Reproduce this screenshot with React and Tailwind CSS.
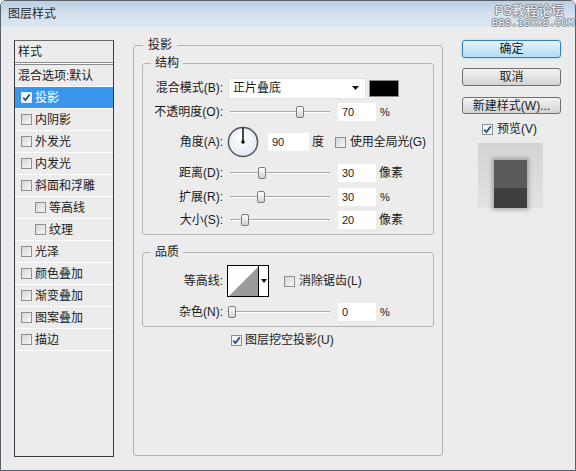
import React from 'react';

const font = "font-['Liberation_Sans','Noto_Sans_CJK_SC',sans-serif]";

function Check({ checked, light }) {
  return (
    <span
      className={`inline-flex size-[11px] shrink-0 items-center justify-center border ${
        light ? 'border-[#dfe9f5] bg-white' : 'border-[#8e8f8f] bg-gradient-to-br from-[#d6d6d6] to-[#f6f6f6]'
      } ${checked ? 'bg-none bg-[#f4f6fa]' : ''}`}
    >
      {checked && (
        <svg width="9" height="9" viewBox="0 0 9 9">
          <path d="M1.2 4.6 L3.4 7 L7.8 1.4" fill="none" stroke="#2c4d8c" strokeWidth="1.8" />
        </svg>
      )}
    </span>
  );
}

function Slider({ pos, width = 100 }) {
  return (
    <div className="relative h-[14px]" style={{ width }}>
      <div className="absolute left-0 right-0 top-[6px] h-[2px] border-t border-[#a9a9a9] bg-white" />
      <div
        className="absolute top-[1px] h-[12px] w-[8px] rounded-[2px] border border-[#7b7b7b] bg-gradient-to-b from-white to-[#d2d2d2]"
        style={{ left: pos - 4 }}
      />
    </div>
  );
}

function Field({ value, w = 38 }) {
  return (
    <div
      className="flex h-[18px] items-center bg-white pl-[4px] text-[11px] text-[#222]"
      style={{ width: w }}
    >
      {value}
    </div>
  );
}

function Row({ label, children, className = '' }) {
  return (
    <div className={`flex items-center ${className}`}>
      <div className="w-[80px] shrink-0 text-right">{label}</div>
      {children}
    </div>
  );
}

const styles = [
  { t: '混合选项:默认', box: false },
  { t: '投影', checked: true, sel: true },
  { t: '内阴影' },
  { t: '外发光' },
  { t: '内发光' },
  { t: '斜面和浮雕' },
  { t: '等高线', indent: true },
  { t: '纹理', indent: true },
  { t: '光泽' },
  { t: '颜色叠加' },
  { t: '渐变叠加' },
  { t: '图案叠加' },
  { t: '描边' },
];

export default function App() {
  return (
    <div className={`${font} flex h-[471px] w-[576px] flex-col overflow-hidden rounded-t-[6px] border border-[#58606a] bg-[#ececec] text-[12px] text-[#1a1a1a]`}>
      {/* title bar */}
      <div className="relative flex h-[26px] shrink-0 items-center bg-gradient-to-b from-[#bccfe4] via-[#d3e0ee] to-[#dbe6f1] pl-[7px] text-[12px] text-[#2a2a2a]">
        图层样式
        <div className="absolute right-[1px] top-[3px] flex flex-col items-end leading-none text-[#f2f5f8] [text-shadow:1px_0_#7f858c,-1px_0_#7f858c,0_1px_#7f858c,0_-1px_#7f858c]">
          <span className="mr-[10px] text-[13px]">PS教程论坛</span>
          <span className="mt-[1px] font-['Liberation_Mono',monospace] text-[10.5px]">BBS.16XX8.COM</span>
        </div>
      </div>

      <div className="flex flex-1 pl-[13px] pt-[13px]">
        {/* left list */}
        <div className="flex h-[417px] w-[100px] shrink-0 flex-col border border-[#3a3a3a] border-t-[#6a6a6a]">
          <div className="flex h-[21px] items-center pl-[3px]">样式</div>
          <div className="h-[3px] border-y border-[#8c8c8c] bg-white" />
          {styles.map((s) => (
            <div
              key={s.t}
              className={`flex h-[22px] items-center border-b border-white ${
                s.sel ? 'bg-[#3a95ec] text-white' : ''
              } ${s.box === false ? 'pl-[3px]' : s.indent ? 'pl-[20px]' : 'pl-[6px]'}`}
            >
              {s.box !== false && <Check checked={s.checked} light={s.sel} />}
              <span className={s.box === false ? '' : 'ml-[3px]'}>{s.t}</span>
            </div>
          ))}
        </div>

        {/* main group */}
        <fieldset className="-mt-[3px] ml-[19px] h-[419px] w-[310px] shrink-0 rounded-[3px] border border-[#b3b3b3] px-[8px]">
          <legend className="ml-[1px] px-[5px] leading-[16px]">投影</legend>

          <fieldset className="mt-[2px] rounded-[3px] border border-[#b3b3b3] pb-[3px]">
            <legend className="ml-[8px] px-[4px] leading-[16px]">结构</legend>

            <Row label="混合模式(B):" className="mt-[6px] h-[22px]">
              <div className="ml-[5px] flex h-[21px] w-[138px] items-center justify-between border border-[#e2e2e2] bg-white pl-[4px] pr-[6px]">
                <span>正片叠底</span>
                <svg width="7" height="4" viewBox="0 0 7 4"><path d="M0 0H7L3.5 4Z" fill="#111" /></svg>
              </div>
              <div className="ml-[3px] h-[17px] w-[30px] border border-[#8a8a8a] bg-black" />
            </Row>

            <Row label="不透明度(O):" className="mt-[2px] h-[22px]">
              <div className="ml-[7px]"><Slider pos={70} /></div>
              <div className="ml-[8px]"><Field value="70" /></div>
              <span className="ml-[4px] text-[11px]">%</span>
            </Row>

            <Row label="角度(A):" className="mt-[3px] h-[32px]">
              <svg className="ml-[4px]" width="32" height="32" viewBox="0 0 32 32">
                <defs>
                  <radialGradient id="dial" cx="45%" cy="40%" r="60%">
                    <stop offset="0%" stopColor="#ffffff" />
                    <stop offset="100%" stopColor="#e3e8ef" />
                  </radialGradient>
                </defs>
                <circle cx="16" cy="16" r="14.6" fill="url(#dial)" stroke="#4e5a66" strokeWidth="1.5" />
                <line x1="16" y1="16" x2="16" y2="1.8" stroke="#000" strokeWidth="1.4" />
                <circle cx="16" cy="16" r="1.7" fill="#000" />
              </svg>
              <div className="ml-[9px]"><Field value="90" w={41} /></div>
              <span className="ml-[3px]">度</span>
              <span className="ml-[11px] flex items-center">
                <Check />
                <span className="ml-[4px] tracking-[-0.2px]">使用全局光(G)</span>
              </span>
            </Row>

            <Row label="距离(D):" className="mt-[4px] h-[22px]">
              <div className="ml-[7px]"><Slider pos={32} /></div>
              <div className="ml-[8px]"><Field value="30" /></div>
              <span className="ml-[3px]">像素</span>
            </Row>

            <Row label="扩展(R):" className="mt-[2px] h-[22px]">
              <div className="ml-[7px]"><Slider pos={31} /></div>
              <div className="ml-[8px]"><Field value="30" /></div>
              <span className="ml-[4px] text-[11px]">%</span>
            </Row>

            <Row label="大小(S):" className="mt-[1px] h-[22px]">
              <div className="ml-[7px]"><Slider pos={15} /></div>
              <div className="ml-[8px]"><Field value="20" /></div>
              <span className="ml-[3px]">像素</span>
            </Row>
          </fieldset>

          <fieldset className="mt-[9px] rounded-[3px] border border-[#b3b3b3] pb-[5px]">
            <legend className="ml-[8px] px-[4px] leading-[16px]">品质</legend>

            <Row label="等高线:" className="mt-[5px] h-[32px]">
              <div className="ml-[4px] flex h-[32px] w-[42px] border border-black bg-white">
                <svg width="30" height="30" viewBox="0 0 30 30">
                  <polygon points="1,30 30,1 30,30" fill="#9a9a9a" />
                </svg>
                <div className="flex w-[10px] items-center justify-center border-l border-black">
                  <svg width="6" height="4" viewBox="0 0 6 4"><path d="M0 0H6L3 4Z" fill="#111" /></svg>
                </div>
              </div>
              <span className="ml-[15px] flex items-center">
                <Check />
                <span className="ml-[4px]">消除锯齿(L)</span>
              </span>
            </Row>

            <Row label="杂色(N):" className="mt-[6px] h-[18px]">
              <div className="ml-[4px]"><Slider pos={5} width={103} /></div>
              <div className="ml-[8px]"><Field value="0" /></div>
              <span className="ml-[4px] text-[11px]">%</span>
            </Row>
          </fieldset>

          <div className="mt-[5px] flex h-[16px] items-center pl-[89px]">
            <Check checked />
            <span className="ml-[3px]">图层挖空投影(U)</span>
          </div>
        </fieldset>

        {/* right column */}
        <div className="ml-[19px] flex w-[99px] shrink-0 flex-col">
          <button className="flex h-[18px] items-center justify-center rounded-[3px] border border-[#3c7fb1] bg-gradient-to-b from-[#e3f3fc] to-[#b3dcf4] shadow-[0_0_2px_#7cc4ee]">
            确定
          </button>
          <button className="mt-[10px] flex h-[18px] items-center justify-center rounded-[3px] border border-[#707070] bg-gradient-to-b from-[#f3f3f3] to-[#d4d4d4]">
            取消
          </button>
          <button className="mt-[11px] flex h-[17px] items-center justify-center rounded-[3px] border border-[#707070] bg-gradient-to-b from-[#f3f3f3] to-[#d4d4d4]">
            新建样式(W)...
          </button>
          <div className="mt-[7px] flex h-[16px] items-center pl-[20px]">
            <Check checked />
            <span className="ml-[4px]">预览(V)</span>
          </div>
          <div className="ml-[16px] mt-[6px] flex h-[65px] w-[65px] items-end justify-center bg-gradient-to-b from-[#d4d4d4] to-[#e2e2e2]">
            <div className="flex h-[48px] w-[33px] flex-col shadow-[0_0_4px_2px_rgba(0,0,0,0.25)]">
              <div className="h-[28px] bg-[#5a5a5a]" />
              <div className="flex-1 bg-[#3f3f3f]" />
            </div>
          </div>
        </div>
      </div>
    </div>
  );
}
